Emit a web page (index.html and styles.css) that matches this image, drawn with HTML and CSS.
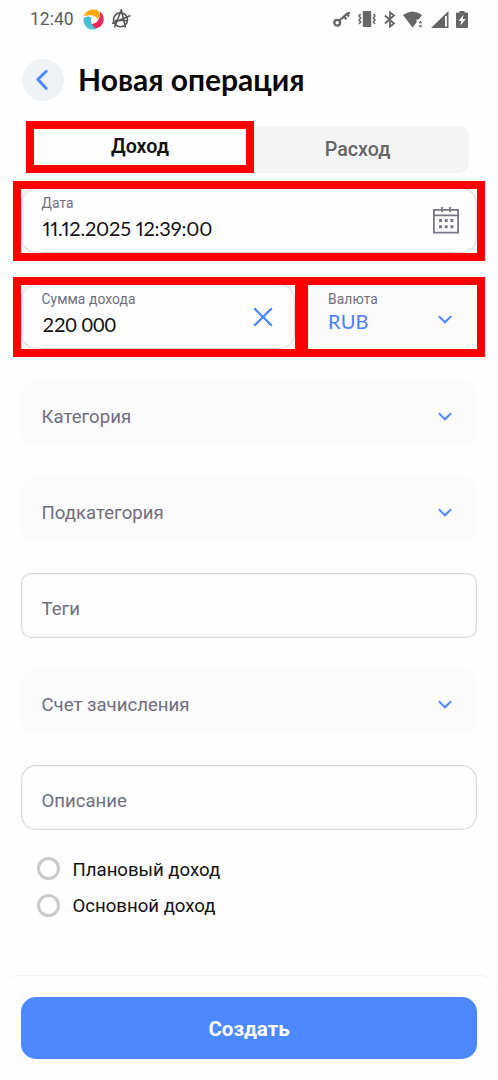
FILE: index.html
```html
<!DOCTYPE html>
<html lang="ru">
<head>
<meta charset="utf-8">
<meta name="viewport" content="width=device-width">
<title>Новая операция</title>
<link rel="stylesheet" href="styles.css">
</head>
<body>
<div class="statusbar">
  <span class="clock">12:40</span>
  <svg class="app-icon" width="21" height="21" viewBox="0 0 21 21">
    <path d="M.8 7.200C2.400 2.500 6.800.2 11 .6c3.800.2 6.300 2.500 5.800 5.700-.2 1.900-1.200 3.200-2.600 3.700C13.500 6.800 8.500 5.300.8 7.200z" fill="#fca80c"/>
    <path d="M17 2.600c3.400 2.600 4.600 7.200 3 11.200-1.400 3.500-4.800 5.800-7.800 5.300-2-.4-3.200-2-3.200-4.200 5-.4 8.400-4.500 8-12.300z" fill="#ea2860"/>
    <path d="M.5 9.800c1.700-2.300 5.500-3.100 8-.9-1.500 4 .3 8 5.300 11.100C9.500 21.500 4.800 20.200 2.300 16.700.9 14.500.3 12 .5 9.800z" fill="#4dbdd4"/>
  </svg>
  <svg class="anarchy" width="20" height="20" viewBox="0 0 20 20" fill="none" stroke="#555" stroke-width="1.600">
    <circle cx="9.500" cy="10.800" r="7"/><path d="M3.500 18.500 10.300 1l4.200 17.500M1 14.500 19.500 6.500M4 11.500h13"/>
  </svg>
  <div class="system-icons">
    <svg width="18" height="16" viewBox="0 0 18 16" fill="none" stroke="#666" stroke-width="2.300"><circle cx="4.200" cy="11.700" r="2.900"/><path d="M6.500 9.500 14.300 2.500l2.700-.7M10.800 5.400l2.700 2.900M13.500 2.900l2.500 2.600"/></svg>
    <svg width="18" height="16" viewBox="0 0 18 16"><path fill="#666" d="M4.800 0h8.400v16H4.800z"/><path d="M2.500 3 1 5l1.700 2L1 9l1.700 2L1 13M15.500 3 17 5l-1.700 2L17 9l-1.700 2 1.700 2" fill="none" stroke="#666" stroke-width="1.500"/></svg>
    <svg width="12" height="17" viewBox="0 0 12 17" fill="none" stroke="#666" stroke-width="1.800"><path d="m1 4.500 9 8L6 15.700V1.300L10 4.500 1 12.500"/></svg>
    <svg width="20" height="17" viewBox="0 0 20 17" fill="#666"><path d="M0 4Q9.500-3 19 4l-3.200 4.500h-2.300v3L9.500 16.500z"/><path d="m17.400 9.800 2 2.400h-4zM17.400 16.700l-2-2.400h4z"/></svg>
    <svg width="18" height="17" viewBox="0 0 18 17"><path fill="#666" d="M0 17 17.500 0v17z"/><path fill="#fff" d="M14 5h1.900v10.500H14z"/></svg>
    <svg width="12" height="17" viewBox="0 0 12 17"><path fill="#666" d="M3.500 0h5v1.500H11q1 0 1 1V16q0 1-1 1H1q-1 0-1-1V2.500q0-1 1-1h2.500z"/><path fill="#fff" d="M7.500 3.800 2.500 10h2.800l-.8 4.500L9.800 8H6.900z"/></svg>
  </div>
</div>

<header class="header">
  <button class="back" aria-label="Назад"><svg width="42" height="42" viewBox="0 0 42 42"><path d="m24.300 12.200-8.500 8.300 8.500 9" fill="none" stroke="#4a88ff" stroke-width="2.900" stroke-linecap="round" stroke-linejoin="round"/></svg></button>
  <h1 class="title">Новая операция</h1>
</header>

<main class="form">
  <div class="tabs">
    <div class="tab tab-active">Доход</div>
    <div class="tab">Расход</div>
  </div>

  <div class="field outlined marked date">
    <div class="stack"><span class="label">Дата</span><span class="value">11.12.2025 12:39:00</span></div>
    <svg class="calendar" width="26" height="27" viewBox="0 0 26 27" fill="none" stroke="#777787" stroke-width="1.800"><path d="M.9 2.800h24.200v22.900H.9zM.9 8.300h24.200M9 0v5.300M17 0v5.300"/><path stroke-width="3" stroke-dasharray="3 2.700" d="M6 13.500h14.400M6 19.800h14.400"/></svg>
  </div>

  <div class="amount-row">
    <div class="field outlined marked amount">
      <div class="stack"><span class="label">Сумма дохода</span><span class="value sum">220 000</span></div>
      <svg class="clear" width="20" height="20" viewBox="0 0 20 20"><path d="m1.200 1.200 17.600 17.600m0-17.600L1.200 18.800" stroke="#4a88ff" stroke-width="2.300"/></svg>
    </div>
    <div class="field filled marked currency">
      <div class="stack"><span class="label">Валюта</span><span class="value code">RUB</span></div>
      <svg class="chevron" width="14" height="9" viewBox="0 0 14 9"><path d="m.8 1.100 6.200 6.200 6.200-6.200"/></svg>
    </div>
  </div>

  <div class="field filled"><span class="placeholder">Категория</span><svg class="chevron" width="14" height="9" viewBox="0 0 14 9"><path d="m.8 1.100 6.200 6.200 6.200-6.200"/></svg></div>
  <div class="field filled"><span class="placeholder">Подкатегория</span><svg class="chevron" width="14" height="9" viewBox="0 0 14 9"><path d="m.8 1.100 6.200 6.200 6.200-6.200"/></svg></div>
  <div class="field outlined tags"><span class="placeholder">Теги</span></div>
  <div class="field filled"><span class="placeholder">Счет зачисления</span><svg class="chevron" width="14" height="9" viewBox="0 0 14 9"><path d="m.8 1.100 6.200 6.200 6.200-6.200"/></svg></div>
  <div class="field outlined"><span class="placeholder">Описание</span></div>

  <div class="options">
    <div class="option"><span class="radio"></span><span>Плановый доход</span></div>
    <div class="option"><span class="radio"></span><span>Основной доход</span></div>
  </div>
</main>

<footer class="footer"><button class="submit">Создать</button></footer>
</body>
</html>
```
FILE: styles.css
```css
* { box-sizing: border-box; }
body {
  margin: 0;
  width: 498px;
  height: 1080px;
  overflow: hidden;
  display: flex;
  flex-direction: column;
  background: #fefefe;
  color: #111;
  font-family: Roboto, sans-serif;
}
svg { display: block; flex: none; }
button { border: 0; padding: 0; font: inherit; }

.statusbar { height: 38px; padding: 0 30px; display: flex; align-items: center; }
.clock { width: 43px; font-size: 17.500px; color: #5c5c5c; white-space: nowrap; }
.app-icon { margin-left: 10px; }
.anarchy { margin-left: 7px; }
.system-icons { margin-left: auto; display: flex; align-items: center; gap: 7.500px; }

.header { height: 83px; padding: 21px 22px 0; display: flex; }
.back { width: 42px; height: 42px; border-radius: 50%; background: #eef2f5; }
.title { margin: 0 0 0 14px; font: 700 30px/40px Lato, sans-serif; color: #080808; white-space: nowrap; }

.form { flex: 1; padding: 5px 21px 0; }
.tabs { width: 443px; height: 47px; margin-left: 5px; display: flex; background: #f4f4f4; border-radius: 10px; }
.tab { flex: 1; padding-right: 8px; font-size: 19.700px; font-weight: 500; line-height: 48px; text-align: center; color: #666; }
.tab-active {
  flex: none;
  width: 228px;
  height: 52px;
  margin-top: -5px;
  padding: 0;
  border: 8px solid #f00;
  font-weight: 600;
  line-height: 36px;
  color: #111;
  background: #fefefe;
}

.field {
  position: relative;
  height: 65px;
  margin-bottom: 31px;
  padding: 0 25px 0 20.500px;
  display: flex;
  align-items: center;
  justify-content: space-between;
  border-radius: 15px;
}
.outlined { box-shadow: inset 0 0 0 1.300px #d9dce2; }
.filled { background: #fbfbfb; }
.tags { border-radius: 10px; }
.marked::after {
  content: "";
  position: absolute;
  inset: -7.500px -8px -8px;
  border: 8px solid #f00;
  pointer-events: none;
}
.date { margin-top: 15px; padding-right: 18px; }
.amount-row { display: flex; gap: 13px; margin-bottom: 1px; }
.amount { width: 274px; padding-right: 22px; }
.currency { width: 169px; padding-left: 20px; }
.amount::after { right: -13px; border-right-width: 13px; }
.currency::after { left: 0; border-left: 0; }

.stack { height: 100%; padding-top: 6px; display: flex; flex-direction: column; }
.label { height: 18px; font-size: 13.800px; line-height: 18px; letter-spacing: .1px; color: #6e6e80; }
.value { font: 400 20px/32px Lato, sans-serif; white-space: nowrap; color: #111; }
.date .value { padding-left: 1px; letter-spacing: -.2px; font-variant-numeric: proportional-nums; }
.sum { padding-left: 1px; letter-spacing: -.2px; }
.code { line-height: 27px; letter-spacing: .2px; color: #4a80ff; }
.placeholder { padding-top: 6px; font-size: 18.600px; color: #6e6e80; }
.chevron { margin-top: 5px; fill: none; stroke: #4a88ff; stroke-width: 2; }

.options { margin: -9.500px 0 0 15.500px; }
.option { height: 36.500px; display: flex; align-items: center; gap: 13px; font-size: 18.600px; line-height: 24px; }
.radio { width: 23px; height: 23px; margin-top: -2px; border: 3px solid #cacaca; border-radius: 50%; }

.footer { height: 105px; padding: 21px 21px 0 21px; border-top: 1px solid #f3f3f3; border-radius: 18px 18px 0 0; }
.submit { display: block; width: 456px; height: 62px; padding-top: 1px; border-radius: 15px; background: #4c88ff; color: #fff; font-size: 20.500px; font-weight: 700; }
```
